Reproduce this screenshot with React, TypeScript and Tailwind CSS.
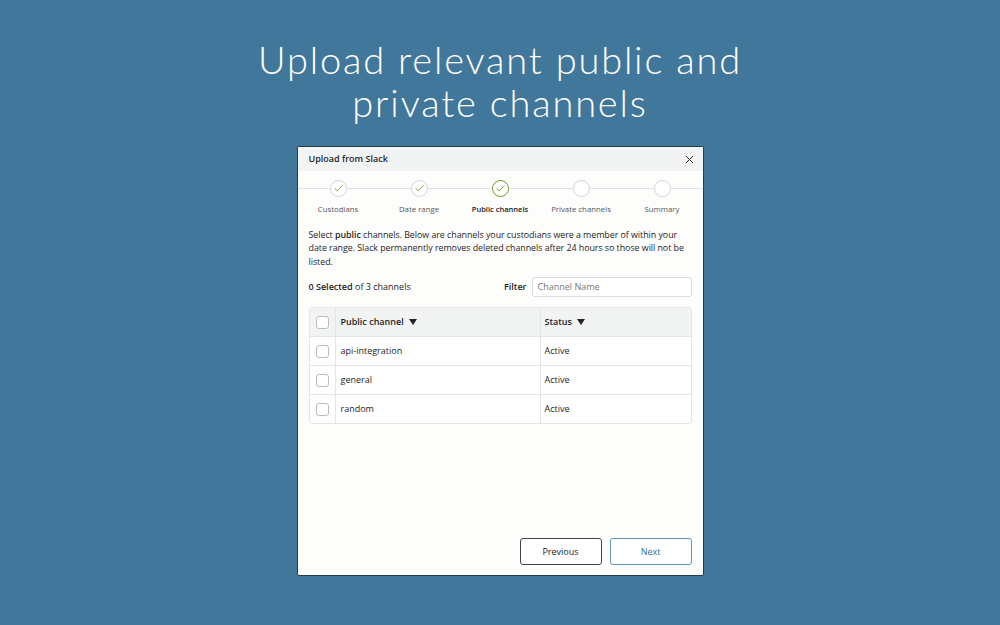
import { X, Check } from "lucide-react";

const steps = [
  { label: "Custodians", state: "done" },
  { label: "Date range", state: "done" },
  { label: "Public channels", state: "current" },
  { label: "Private channels", state: "todo" },
  { label: "Summary", state: "todo" },
];

const channels = ["api-integration", "general", "random"];

function Box() {
  return <span className="block h-[13px] w-[13px] rounded-[3px] border border-[#b9bcbc] bg-white" />;
}

function Caret() {
  return (
    <svg width="8" height="6" viewBox="0 0 8 6" className="ml-[5px] inline-block">
      <path d="M0 0h8L4 6z" fill="#222" />
    </svg>
  );
}

export default function App() {
  return (
    <div
      className="flex h-[625px] w-[1000px] flex-col items-center bg-[#41779a]"
      style={{ fontFamily: '"Open Sans", "Noto Sans", sans-serif' }}
    >
      <h1
        className="mt-[38px] text-center text-[38px] font-light leading-[43px] tracking-[0.048em] text-white"
        style={{ fontFamily: 'Lato, "Open Sans", sans-serif' }}
      >
        Upload relevant public and
        <br />
        private channels
      </h1>

      <div className="mt-[22px] flex h-[430px] w-[407px] flex-col overflow-hidden rounded-[2px] border border-[#2b3a44] bg-[#fdfdfc]">
        <div className="flex h-[24px] items-center justify-between bg-[#f2f4f4] pl-[11px] pr-[7px]">
          <span className="text-[9px] font-semibold text-[#1e1e1e]">Upload from Slack</span>
          <X size={13} strokeWidth={1.8} className="text-[#222]" />
        </div>

        <div className="relative mt-[9px]">
          <div className="absolute left-0 right-0 top-[8px] h-px bg-[#e0e2e2]" />
          <div className="relative grid grid-cols-5">
            {steps.map((s) => (
              <div key={s.label} className="flex flex-col items-center">
                <span
                  className={
                    s.state === "current"
                      ? "flex h-[17px] w-[17px] items-center justify-center rounded-full border-[1.5px] border-[#6f9a2a] bg-white"
                      : "flex h-[17px] w-[17px] items-center justify-center rounded-full border border-[#d3d6d6] bg-white"
                  }
                >
                  {s.state !== "todo" && (
                    <Check size={11} strokeWidth={2} className="text-[#6f9a2a]" />
                  )}
                </span>
                <span
                  className={
                    s.state === "current"
                      ? "mt-[7px] text-[7.5px] font-semibold text-[#222]"
                      : "mt-[7px] text-[7.8px] text-[#555]"
                  }
                >
                  {s.label}
                </span>
              </div>
            ))}
          </div>
        </div>

        <div className="flex flex-1 flex-col px-[11px] pb-[10px]">
          <p className="mt-[12px] pr-[2px] text-[8.9px] leading-[13.5px] tracking-[-0.005em] text-[#1e1e1e]">
            Select <span className="font-semibold">public</span> channels. Below are channels your custodians were a member of within your date range. Slack permanently removes deleted channels after 24 hours so those will not be listed.
          </p>

          <div className="mt-[9px] flex items-center justify-between">
            <span className="text-[9px] text-[#1e1e1e]">
              <span className="font-semibold">0 Selected</span> of 3 channels
            </span>
            <div className="flex items-center">
              <span className="mr-[5px] text-[9px] font-semibold text-[#1e1e1e]">Filter</span>
              <div className="flex h-[20px] w-[160px] items-center rounded-[3px] border border-[#dcdede] bg-white px-[5px] text-[9px] text-[#777]">
                Channel Name
              </div>
            </div>
          </div>

          <div className="mt-[10px] overflow-hidden rounded-[3px] border border-[#e4e6e6]">
            <div className="flex h-[28px] items-center bg-[#f2f4f4] text-[9px] font-semibold text-[#1e1e1e]">
              <div className="flex h-full w-[26px] items-center justify-center border-r border-[#e4e6e6]">
                <Box />
              </div>
              <div className="flex h-full w-[205px] items-center border-r border-[#e4e6e6] pl-[5px]">
                Public channel <Caret />
              </div>
              <div className="flex h-full flex-1 items-center pl-[4px]">
                Status <Caret />
              </div>
            </div>
            {channels.map((c) => (
              <div key={c} className="flex h-[29px] items-center border-t border-[#e4e6e6] bg-white text-[9px] text-[#1e1e1e]">
                <div className="flex h-full w-[26px] items-center justify-center border-r border-[#e4e6e6]">
                  <Box />
                </div>
                <div className="flex h-full w-[205px] items-center border-r border-[#e4e6e6] pl-[5px]">{c}</div>
                <div className="flex h-full flex-1 items-center pl-[4px]">Active</div>
              </div>
            ))}
          </div>

          <div className="mt-auto flex justify-end gap-[8px]">
            <button className="h-[27px] w-[82px] rounded-[3px] border border-[#444] bg-white text-[9px] text-[#222]">
              Previous
            </button>
            <button className="h-[27px] w-[82px] rounded-[3px] border border-[#5b95b8] bg-white text-[9px] text-[#2c6f99]">
              Next
            </button>
          </div>
        </div>
      </div>
    </div>
  );
}
